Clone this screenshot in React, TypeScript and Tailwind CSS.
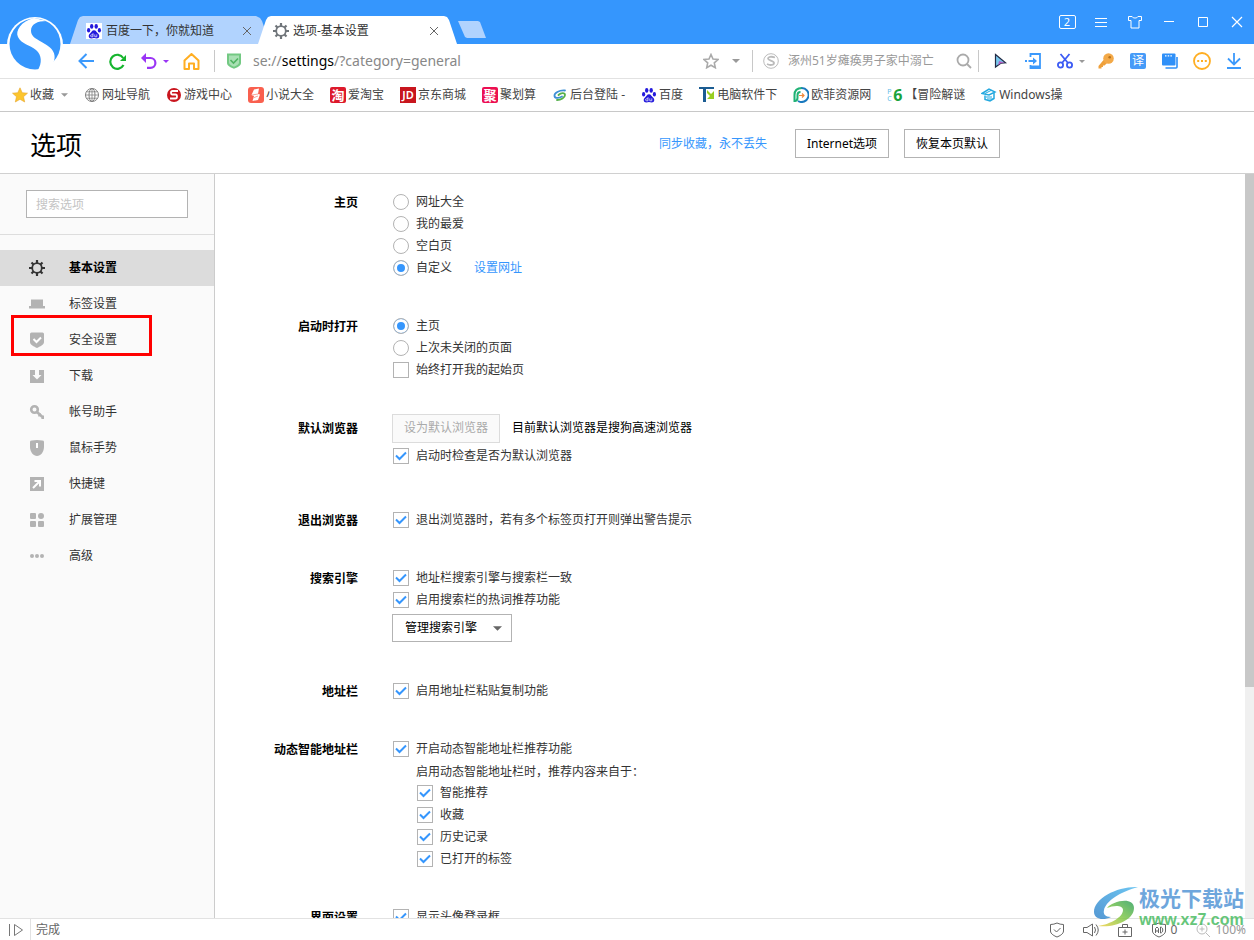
import type { ReactNode } from "react";

function Paw() {
    return (
        <svg viewBox="0 0 16 16" className="size-4 shrink-0">
            <g fill="#2319dc">
                <ellipse cx="5.700" cy="3.400" rx="1.700" ry="2.400" />
                <ellipse cx="10.200" cy="3.400" rx="1.700" ry="2.400" />
                <ellipse cx="2.600" cy="7.200" rx="1.600" ry="2.200" />
                <ellipse cx="13.400" cy="7.200" rx="1.600" ry="2.200" />
                <path d="M8 7.200c-2 0-2.600 2-4 3.200-2.200 1.900-1.400 5 1.200 5 1.100 0 1.800-.3 2.800-.3s1.700.3 2.800.3c2.600 0 3.400-3.100 1.200-5C10.600 9.200 10 7.200 8 7.200z" />
            </g>
            <path d="M7 10.200v3.600H5.600a1 1 0 0 1 0-2H7M8.800 11.400v2.400h2v-2.400" fill="none" stroke="#fff" strokeWidth=".7" />
        </svg>
    );
}

function Gear({ className, width }: { className: string; width: number }) {
    return (
        <svg viewBox="0 0 16 16" className={className} fill="none" stroke="currentColor" strokeWidth={width}>
            <circle cx="8" cy="8" r="4.800" />
            <path d="M8 0v3M8 13v3M0 8h3M13 8h3M2.500 2.500l2 2M11.500 11.500l2 2M13.500 2.500l-2 2M4.500 11.500l-2 2" strokeWidth="2.200" />
        </svg>
    );
}

function Caret({ className }: { className: string }) {
    return (
        <svg viewBox="0 0 8 4" className={className} fill="currentColor">
            <path d="M0 0h8L4 4z" />
        </svg>
    );
}

function CloseIcon() {
    return (
        <svg viewBox="0 0 12 12" className="size-3" fill="none" stroke="#666">
            <path d="M2 2l8 8M10 2l-8 8" />
        </svg>
    );
}

function Logo() {
    return (
        <svg viewBox="0 0 56 56" className="absolute top-[17px] left-[7px] size-14">
            <circle cx="28" cy="28" r="28" fill="#fff" />
            <circle cx="28" cy="27" r="25.500" fill="#3596fd" />
            <path
                d="M27 1C14 4 8 14 11 20c3 7 12 8 18 13 6 5 6 13 2 20h11c9-11 7-20-4-26-8-5-14-7-14-13C24 7 30 4 40 4z"
                fill="#fff"
            />
            <path d="M42 52c7-4 12-13 12-24 3 15-4 26-14 28z" fill="#fff" />
        </svg>
    );
}

function TitleBar() {
    return (
        <div className="flex h-11 shrink-0 items-end bg-[#3596fd] pl-[70px]">
            <div className="flex h-7 w-[200px] items-center bg-[#b1d3fe] pt-0.5 pl-4 [clip-path:polygon(0_100%,8px_4px,10px_1px,13px_0,calc(100%_-_14px)_0,calc(100%_-_10px)_2px,calc(100%_-_8px)_5px,100%_100%)]">
                <span className="bg-white"><Paw /></span>
                <span className="ml-1 flex-1">百度一下，你就知道</span>
                <button aria-label="关闭标签" className="mr-[17px]"><CloseIcon /></button>
            </div>
            <div className="-ml-3 flex h-7 w-[199px] items-center bg-white pt-0.5 pl-[15px] [clip-path:polygon(0_100%,8px_4px,10px_1px,13px_0,calc(100%_-_13px)_0,calc(100%_-_10px)_1px,calc(100%_-_8px)_4px,100%_100%)]">
                <Gear className="size-4 text-[#70757a]" width={1.8} />
                <span className="ml-1 flex-1">选项-基本设置</span>
                <button aria-label="关闭标签" className="mr-[17px]"><CloseIcon /></button>
            </div>
            <button
                aria-label="新建标签"
                className="mb-1.5 ml-px h-[17px] w-7 bg-[#b1d3fe] [clip-path:polygon(0_0,20px_0,22px_1px,100%_100%,9px_100%,7px_16px)]"
            />
            <div className="ml-auto flex h-11 items-center text-white">
                <button className="flex w-[34px] justify-center">
                    <span className="h-[14px] w-[17px] rounded-xs border border-white text-[11px] leading-3">2</span>
                </button>
                <button aria-label="菜单" className="flex w-[34px] justify-center">
                    <svg viewBox="0 0 16 16" className="size-4" stroke="currentColor">
                        <path d="M2 4.500h12M2 8.500h12M2 12.500h12" />
                    </svg>
                </button>
                <button aria-label="皮肤" className="flex w-[34px] justify-center">
                    <svg viewBox="0 0 16 16" className="size-4" fill="none" stroke="currentColor">
                        <path d="M1.500 2.500h3.500c1 2 5 2 6 0h3.500v4h-2.500v7.500h-8v-7.500h-2.500z" />
                    </svg>
                </button>
                <button aria-label="最小化" className="flex w-[34px] justify-center">
                    <svg viewBox="0 0 16 16" className="size-4" stroke="currentColor"><path d="M3 7.500h10" /></svg>
                </button>
                <button aria-label="最大化" className="flex w-[34px] justify-center">
                    <svg viewBox="0 0 16 16" className="size-4" fill="none" stroke="currentColor">
                        <path d="M3.500 3.500h9v9h-9z" />
                    </svg>
                </button>
                <button aria-label="关闭" className="flex w-[34px] justify-center">
                    <svg viewBox="0 0 16 16" className="size-4" stroke="currentColor" strokeWidth="1.200">
                        <path d="M3 3l10 10M13 3l-10 10" />
                    </svg>
                </button>
            </div>
        </div>
    );
}

function Toolbar() {
    return (
        <div className="flex h-[35px] shrink-0 items-center border-b border-[#e2e2e2] pl-[78px]">
            <button aria-label="后退">
                <svg viewBox="0 0 16 16" className="size-4" fill="none" stroke="#3b99fc" strokeWidth="2">
                    <path d="M16 8H1.500M8.500 1L1.500 8l7 7" />
                </svg>
            </button>
            <button aria-label="刷新" className="ml-[15px]">
                <svg viewBox="0 0 17 17" className="size-[17px]">
                    <path d="M14.200 5A7 7 0 1 0 14.500 12" fill="none" stroke="#16b52e" strokeWidth="2.200" />
                    <path d="M17 2v6h-6z" fill="#16b52e" />
                </svg>
            </button>
            <button aria-label="撤销" className="ml-[15px] flex items-center gap-1.5 text-[#9a35f5]">
                <svg viewBox="0 0 16 16" className="size-4">
                    <path d="M0 5l5-5v10z" fill="currentColor" />
                    <path d="M4 5h5.500a4.800 4.800 0 0 1 0 9.800H6" fill="none" stroke="currentColor" strokeWidth="2.200" />
                </svg>
                <Caret className="h-[3px] w-1.5" />
            </button>
            <button aria-label="主页" className="ml-3.5">
                <svg viewBox="0 0 17 17" className="size-[17px]" fill="none" stroke="#ffae22" strokeWidth="2" strokeLinejoin="round">
                    <path d="M1.500 7.500l7-6.500 7 6.500V16h-4.500v-5.500h-5V16h-4.500z" />
                </svg>
            </button>
            <div className="ml-3.5 h-[22px] w-px bg-[#c8c8c8]" />
            <svg viewBox="0 0 16 16" className="ml-[11px] size-4">
                <path d="M1 .5h14v9.500c0 3-4 4.500-7 5.800C5 14.500 1 13 1 10z" fill="#73c983" />
                <path d="M3 2.500h10v7c0 2-3 3.200-5 4.200-2-1-5-2.200-5-4.200z" fill="#a9e0b4" />
                <path d="M4.500 7l3 3 4.500-4.500" fill="none" stroke="#4fb362" strokeWidth="1.600" />
            </svg>
            <div className="ml-[11px] flex-1 truncate text-sm text-[#888]">
                se://<span className="text-black">settings</span>/?category=general
            </div>
            <button aria-label="收藏此页" className="mr-[13px]">
                <svg viewBox="0 0 16 16" className="size-4" fill="none" stroke="#aaa" strokeWidth="1.600">
                    <path d="M8 1.500l2 4.500 5 .5-3.700 3.300 1 4.900L8 12.200l-4.300 2.500 1-4.900L1 6.500 6 6z" />
                </svg>
            </button>
            <button aria-label="更多" className="mr-3 text-[#999]"><Caret className="h-1 w-2" /></button>
            <div className="flex w-[226px] items-center">
                <div className="h-[22px] w-px bg-[#c8c8c8]" />
                <svg viewBox="0 0 16 16" className="ml-2.5 size-4" fill="none" stroke="#bbb">
                    <circle cx="8" cy="8" r="7.300" />
                    <path d="M12 4.500C8 3 5 4 5 5.600c0 2 6 2 6 4.400 0 2.200-4 2.600-7 1" strokeWidth="1.800" />
                </svg>
                <input
                    aria-label="搜索"
                    placeholder="涿州51岁瘫痪男子家中溺亡"
                    className="ml-[9px] min-w-0 flex-1 outline-none placeholder:text-[#999]"
                />
                <button aria-label="搜索" className="mr-1.5">
                    <svg viewBox="0 0 16 16" className="size-4" fill="none" stroke="#aaa" strokeWidth="1.800">
                        <circle cx="7" cy="7" r="5.500" />
                        <path d="M11 11l4 4" />
                    </svg>
                </button>
            </div>
            <div className="h-[22px] w-px bg-[#c8c8c8]" />
            <div className="flex items-center gap-4 pr-3 pl-[14px]">
                <button aria-label="选择">
                    <svg viewBox="0 0 16 16" className="size-4">
                        <path d="M2.500 1.500l10 8.300-4.300.3-5.700 4z" fill="#79c8ee" stroke="#222b45" strokeWidth="1.200" />
                        <path d="M6 8l6 1.800-3.800.3-3 2z" fill="#b35fc4" />
                    </svg>
                </button>
                <button aria-label="发送到手机">
                    <svg viewBox="0 0 16 16" className="size-4" fill="none" stroke="#3b99fc" strokeWidth="1.800">
                        <path d="M5.500 4V1h9.500v14H5.500v-3M0 8h2M3.500 8H10" />
                        <path d="M8 4.500l4 3.500-4 3.500z" fill="#3b99fc" stroke="none" />
                        <path d="M5 13.500h10" strokeWidth="2" />
                    </svg>
                </button>
                <button aria-label="截图" className="flex w-[25px] items-center gap-1.5 text-[#999]">
                    <svg viewBox="0 0 16 16" className="size-4 shrink-0" fill="none" stroke="#3c5bf4" strokeWidth="1.800">
                        <circle cx="3.500" cy="12" r="2.600" />
                        <circle cx="12.500" cy="12" r="2.600" />
                        <path d="M3.500 1l7.500 9M12.500 1L5 10" />
                    </svg>
                    <Caret className="h-[3px] w-1.5 shrink-0" />
                </button>
                <button aria-label="密码">
                    <svg viewBox="0 0 16 16" className="size-4">
                        <path d="M5.500 7L.5 13v2.500h3V14H5v-1.500h1.500L9 10z" fill="#efa03a" />
                        <circle cx="10.500" cy="5.500" r="5.300" fill="#f3a948" />
                        <circle cx="11.700" cy="4.300" r="1.300" fill="#b8721b" />
                    </svg>
                </button>
                <button aria-label="翻译" className="size-4 rounded-xs bg-[#469bf8] text-center leading-4 text-white">译</button>
                <button aria-label="窗口">
                    <svg viewBox="0 0 16 16" className="size-4">
                        <path d="M0 1.500Q0 .5 1 .5h11.500q1 0 1 1v10q0 1-1 1H1q-1 0-1-1z" fill="#2f90f8" />
                        <path d="M15 4v10q0 1-1 1H3.500" fill="none" stroke="#2f90f8" strokeWidth="1.600" />
                        <path d="M3 2.800h8" stroke="#fff" strokeWidth="1.300" strokeDasharray="1.500 1.200" />
                    </svg>
                </button>
                <button aria-label="更多工具" className="-mx-px">
                    <svg viewBox="0 0 18 18" className="size-[18px]">
                        <circle cx="9" cy="9" r="8" fill="none" stroke="#ffae22" strokeWidth="1.800" />
                        <path d="M4.200 9h10" stroke="#ffae22" strokeWidth="2" strokeDasharray="2 1.800" />
                    </svg>
                </button>
                <button aria-label="下载">
                    <svg viewBox="0 0 16 16" className="size-4" fill="none" stroke="#3b99fc" strokeWidth="1.800">
                        <path d="M8 0v11M2 5.500l6 6 6-6M1 15h14" />
                    </svg>
                </button>
            </div>
        </div>
    );
}

const bookmarks: { name: string; icon: ReactNode }[] = [
    {
        name: "网址导航",
        icon: (
            <svg viewBox="0 0 16 16" className="size-4" fill="none" stroke="#808080">
                <circle cx="8" cy="8" r="6.500" />
                <ellipse cx="8" cy="8" rx="3" ry="6.500" />
                <path d="M8 1.500v13M1.500 8h13M2.500 4.800h11M2.500 11.200h11" strokeWidth=".8" />
            </svg>
        ),
    },
    {
        name: "游戏中心",
        icon: (
            <svg viewBox="0 0 16 16" className="size-4">
                <circle cx="8" cy="8" r="7" fill="#c9151e" />
                <path d="M12 4H6.500Q5 4 5 5.800T6.500 7.500h3q1.500 0 1.500 2T9.500 11.500H4" fill="none" stroke="#fff" strokeWidth="1.800" />
            </svg>
        ),
    },
    {
        name: "小说大全",
        icon: (
            <svg viewBox="0 0 16 16" className="size-4">
                <rect width="16" height="16" rx="3" fill="#f9604f" />
                <path d="M6 2.500l5-1-1 5.500 2 .5-2 5.500-5.500 1L6 9 3.500 8z" fill="#fff" />
                <path d="M4 8l6-1M5 11l5-2" stroke="#f9a49a" />
            </svg>
        ),
    },
    {
        name: "爱淘宝",
        icon: <span className="block size-4 rounded-xs bg-[#dd1a2c] text-center text-[13px] leading-4 font-bold text-white">淘</span>,
    },
    {
        name: "京东商城",
        icon: <span className="block size-4 bg-[#c8161e] text-center text-[11px] leading-4 font-semibold text-white">JD</span>,
    },
    {
        name: "聚划算",
        icon: <span className="block size-4 rounded-xs bg-[#ec0f51] text-center text-[13px] leading-4 font-bold text-white">聚</span>,
    },
    {
        name: "后台登陆 -",
        icon: (
            <svg viewBox="0 0 16 16" className="size-4" fill="none" strokeLinecap="round">
                <path d="M13 3.500C7 3 2 6 2.500 9s5 2 7.500.5" stroke="#3d8fd6" strokeWidth="1.800" />
                <path d="M6.500 8C9 5.500 13 5.500 13 8s-4 5-8 5" stroke="#55b04b" strokeWidth="1.800" />
            </svg>
        ),
    },
    { name: "百度", icon: <Paw /> },
    {
        name: "电脑软件下",
        icon: (
            <svg viewBox="0 0 16 16" className="size-4">
                <path d="M0 0h15v2H7v13H4V2H0z" fill="#1b5c92" />
                <path d="M8 3l4 4 3-3v8H8l3-3-3-3z" fill="#98ce21" />
            </svg>
        ),
    },
    {
        name: "欧菲资源网",
        icon: (
            <svg viewBox="0 0 16 16" className="size-4" fill="none" strokeWidth="2">
                <path d="M9 1C4 1 1.500 4 1.500 8v7" stroke="#20b275" />
                <path d="M8.500 1A7 7 0 1 1 5 14" stroke="#1878be" />
                <path d="M1.500 14c2 0 3-1 3-3V8c0-2 1-3 3-3" stroke="#20b275" />
                <path d="M6 8.500h5M9 6.500l2 2-2 2" stroke="#f08a3c" strokeWidth="1.200" />
            </svg>
        ),
    },
    {
        name: "【冒险解谜",
        icon: (
            <span className="flex size-4 items-center">
                <span className="w-1.5 text-[7px] leading-[7px] text-[#62bde8]">P<br />C</span>
                <span className="text-base leading-4 font-bold text-[#19a33b]">6</span>
            </span>
        ),
    },
    {
        name: "Windows操",
        icon: (
            <svg viewBox="0 0 16 16" className="size-4" fill="none" stroke="#25a9df" strokeWidth="1.500">
                <path d="M1 6.500L8 2l6 3-6 3zM4 8.500v4l5 1.500 4-2.500V6" />
                <path d="M5 10h6M6 12h6M4 6.500l6-3" strokeWidth="1" />
            </svg>
        ),
    },
];

function BookmarkBar() {
    return (
        <div className="flex h-[33px] shrink-0 items-center gap-4 overflow-hidden border-b border-[#c8c8c8] pl-3 whitespace-nowrap text-[#444]">
            <button className="flex items-center gap-0.5">
                <svg viewBox="0 0 16 16" className="size-4">
                    <path d="M8 .8l2.200 4.900 5.300.5-4 3.500 1.200 5.300L8 12.300 3.300 15l1.200-5.300-4-3.500 5.300-.5z" fill="#fcc52d" stroke="#e5a52b" strokeWidth=".6" />
                </svg>
                收藏
                <Caret className="ml-[5px] h-1 w-[7px] text-[#999]" />
            </button>
            {bookmarks.map((b) => (
                <a key={b.name} href="#" className="flex items-center gap-0.5">
                    {b.icon}
                    {b.name}
                </a>
            ))}
        </div>
    );
}

const navItems: { name: string; icon: ReactNode }[] = [
    { name: "基本设置", icon: <Gear className="size-4 text-[#333]" width={1.8} /> },
    { name: "标签设置", icon: <path d="M2 3.500h12V10h2v2.500H0V10h2z" /> },
    {
        name: "安全设置",
        icon: (
            <>
                <path d="M1 2Q1 .5 2.500 .5h11Q15 .5 15 2v8c0 3-4 4.500-7 6-3-1.500-7-3-7-6z" />
                <path d="M4.500 7l3 3L12 5.500" fill="none" stroke="#fff" strokeWidth="2" />
            </>
        ),
    },
    { name: "下载", icon: <path d="M1 2h5v5H3.500L8 11.500 12.500 7H10V2h5v13H1z" /> },
    {
        name: "帐号助手",
        icon: (
            <g fill="none" stroke="#b3b3b3" strokeWidth="2.600">
                <circle cx="5.500" cy="5.500" r="3.300" />
                <path d="M8 8l6 5.500M10.500 9v3.500M13.700 11.500v3.500" />
            </g>
        ),
    },
    {
        name: "鼠标手势",
        icon: (
            <>
                <path d="M1 1.500Q1 0 8 0t7 1.500V7c0 5-3.500 9-7 9S1 12 1 7z" />
                <path d="M8 3v5" stroke="#fff" strokeWidth="2" />
            </>
        ),
    },
    {
        name: "快捷键",
        icon: (
            <>
                <path d="M1 1h14v14H1z" />
                <path d="M4 12l6-6M5.500 5H11v5.500" fill="none" stroke="#fff" strokeWidth="2" />
            </>
        ),
    },
    {
        name: "扩展管理",
        icon: (
            <>
                <rect x="1" y="1" width="6" height="6" rx="1" />
                <circle cx="12" cy="4" r="3" />
                <rect x="1" y="9" width="6" height="6" rx="1" />
                <rect x="9" y="9" width="6" height="6" rx="1" />
            </>
        ),
    },
    {
        name: "高级",
        icon: (
            <>
                <circle cx="3" cy="8" r="2" />
                <circle cx="8" cy="8" r="2" />
                <circle cx="13" cy="8" r="2" />
            </>
        ),
    },
];

function Sidebar() {
    return (
        <aside className="w-[215px] shrink-0 border-r border-[#ccc] bg-[#fafafa]">
            <div className="border-b border-[#ddd] px-[26px] py-4">
                <input
                    aria-label="搜索选项"
                    placeholder="搜索选项"
                    className="h-7 w-full border border-[#b3b3b3] bg-white px-[9px] outline-none placeholder:text-[#c4c4c4]"
                />
            </div>
            <nav className="pt-[15px]">
                {navItems.map((item, i) => (
                    <a
                        key={item.name}
                        href="#"
                        className={
                            i === 0
                                ? "flex h-9 items-center gap-6 bg-[#dcdcdc] pl-[29px] font-bold text-black"
                                : "relative flex h-9 items-center gap-6 pl-[29px]"
                        }
                    >
                        {i === 0 ? item.icon : <svg viewBox="0 0 16 16" className="size-4" fill="#b3b3b3">{item.icon}</svg>}
                        {item.name}
                        {item.name === "安全设置" && (
                            <span className="absolute -top-[7px] left-[11px] h-[41px] w-[141px] border-3 border-[#f00]" />
                        )}
                    </a>
                ))}
            </nav>
        </aside>
    );
}

function Section({ title, className, children }: { title: string; className?: string; children: ReactNode }) {
    return (
        <section className={className ?? "mb-9 flex"}>
            <h2 className="w-[143px] text-right leading-6 font-bold text-black">{title}</h2>
            <div className="ml-[34px]">{children}</div>
        </section>
    );
}

function Check({ label, checked = true }: { label: string; checked?: boolean }) {
    return (
        <label className="ml-px flex h-[22px] items-center gap-[7px]">
            <span className="grid size-4 place-items-center">
                <input
                    type="checkbox"
                    defaultChecked={checked}
                    className="peer col-start-1 row-start-1 size-4 appearance-none border border-[#b3b3b3] bg-white"
                />
                <svg
                    viewBox="0 0 16 16"
                    className="pointer-events-none invisible col-start-1 row-start-1 size-4 peer-checked:visible"
                    fill="none"
                    stroke="#3596fd"
                    strokeWidth="2"
                >
                    <path d="M3 7.500l3.500 3.500L13 4.500" />
                </svg>
            </span>
            <span className="leading-6">{label}</span>
        </label>
    );
}

function Radio({ name, label, checked }: { name: string; label: string; checked?: boolean }) {
    return (
        <label className="ml-px flex h-[22px] items-center gap-[7px]">
            <input
                type="radio"
                name={name}
                defaultChecked={checked}
                className="size-4 appearance-none rounded-full border border-[#b3b3b3] bg-white checked:bg-[#3596fd] checked:shadow-[inset_0_0_0_3px_white]"
            />
            <span className="leading-6">{label}</span>
        </label>
    );
}

function Settings() {
    return (
        <main className="min-w-0 flex-1 overflow-hidden bg-white pt-[17px]">
            <Section title="主页">
                <Radio name="home" label="网址大全" />
                <Radio name="home" label="我的最爱" />
                <Radio name="home" label="空白页" />
                <div className="flex h-[22px] items-center gap-[22px]">
                    <Radio name="home" label="自定义" checked />
                    <a href="#" className="leading-6 text-[#3596fd]">设置网址</a>
                </div>
            </Section>
            <Section title="启动时打开">
                <Radio name="startup" label="主页" checked />
                <Radio name="startup" label="上次未关闭的页面" />
                <Check label="始终打开我的起始页" checked={false} />
            </Section>
            <Section title="默认浏览器" className="mb-[42px] flex">
                <div className="mb-1.5 flex h-[22px] items-center gap-3 leading-6 text-black">
                    <button disabled className="h-[29px] w-[108px] border border-[#dcdcdc] bg-[#fafafa] text-[#aaa]">
                        设为默认浏览器
                    </button>
                    目前默认浏览器是搜狗高速浏览器
                </div>
                <Check label="启动时检查是否为默认浏览器" />
            </Section>
            <section className="mb-9 flex h-[22px]">
                <h2 className="w-[143px] text-right leading-6 font-bold text-black">退出浏览器</h2>
                <div className="ml-[34px]">
                    <Check label="退出浏览器时，若有多个标签页打开则弹出警告提示" />
                </div>
            </section>
            <Section title="搜索引擎" className="mb-[38px] flex">
                <Check label="地址栏搜索引擎与搜索栏一致" />
                <Check label="启用搜索栏的热词推荐功能" />
                <div className="mt-[3px] grid w-[120px] items-center">
                    <select
                        aria-label="管理搜索引擎"
                        className="col-start-1 row-start-1 h-7 appearance-none border border-[#b3b3b3] bg-white pl-3 text-black"
                    >
                        <option>管理搜索引擎</option>
                    </select>
                    <Caret className="pointer-events-none col-start-1 row-start-1 mr-2.5 h-[5px] w-[9px] justify-self-end text-[#666]" />
                </div>
            </Section>
            <Section title="地址栏" className="mb-9 flex h-[22px]">
                <Check label="启用地址栏粘贴复制功能" />
            </Section>
            <Section title="动态智能地址栏">
                <Check label="开启动态智能地址栏推荐功能" />
                <div className="pl-6">
                    <p className="h-[22px] leading-6">启用动态智能地址栏时，推荐内容来自于：</p>
                    <Check label="智能推荐" />
                    <Check label="收藏" />
                    <Check label="历史记录" />
                    <Check label="已打开的标签" />
                </div>
            </Section>
            <Section title="界面设置">
                <Check label="显示头像登录框" />
            </Section>
        </main>
    );
}

function StatusBar() {
    return (
        <footer className="flex h-[22px] shrink-0 items-center border-t border-[#e2e2e2] bg-white pr-2 text-[#666]">
            <button aria-label="侧边栏" className="ml-2">
                <svg viewBox="0 0 16 16" className="size-4" fill="none" stroke="#777">
                    <path d="M1.500 2v12M6.500 2.500l8 5.500-8 5.500z" />
                </svg>
            </button>
            <div className="ml-1.5 h-full w-px bg-[#e2e2e2]" />
            <span className="ml-[5px]">完成</span>
            <div className="ml-auto flex items-center gap-[18px]">
                <svg viewBox="0 0 16 16" className="size-4" fill="none" stroke="#666">
                    <path d="M1.500 2.500Q5 2.500 8 1q3 1.500 6.500 1.500V9c0 3-4 5-6.500 6-2.500-1-6.500-3-6.500-6zM5 7.500l2.500 2.500 4-4" />
                </svg>
                <svg viewBox="0 0 16 16" className="size-4" fill="none" stroke="#666">
                    <path d="M.5 5.500h3.500L9.500 2v12L4 10.500H.5zM11.500 5q2 3 0 6M13 2.500q4.500 5.500 0 11" />
                </svg>
                <svg viewBox="0 0 16 16" className="size-4" fill="none" stroke="#666">
                    <path d="M1.500 5.500h13v9h-13zM5.500 5.500v-3h5v3M8 7.500v5M5.500 10h5" />
                </svg>
                <span className="flex items-center gap-1">
                    <svg viewBox="0 0 16 16" className="size-4" fill="none" stroke="#666">
                        <path d="M1.500 2.500Q5 2.500 8 1q3 1.500 6.500 1.500V9c0 3-4 5-6.500 6-2.500-1-6.500-3-6.500-6z" />
                        <path d="M4.500 11V6.500L6 5l1.500 1.500V11M4.500 9h3M9.500 5v6c3 0 3-6 0-6z" />
                    </svg>
                    0
                </span>
                <span className="flex items-center gap-1 text-[#999]">
                    <svg viewBox="0 0 16 16" className="size-4" fill="none" stroke="#bbb">
                        <circle cx="7" cy="7" r="5" />
                        <path d="M11 11l4 4M4.500 7h5M7 4.500v5" />
                    </svg>
                    100%
                </span>
            </div>
        </footer>
    );
}

function Watermark() {
    return (
        <div className="pointer-events-none absolute right-2.5 bottom-2 flex items-center opacity-80">
            <svg viewBox="0 0 46 42" className="h-[42px] w-[46px]">
                <defs>
                    <linearGradient id="swooshBlue" x1="0" y1="1" x2="1" y2="0">
                        <stop offset="0" stopColor="#2b7fc9" />
                        <stop offset="1" stopColor="#49b8ef" />
                    </linearGradient>
                    <linearGradient id="swooshGreen" x1="0" y1="1" x2="1" y2="0">
                        <stop offset="0" stopColor="#f3cf3c" />
                        <stop offset=".5" stopColor="#7cc63f" />
                        <stop offset="1" stopColor="#249b55" />
                    </linearGradient>
                </defs>
                <path d="M45 1C25 0 1 12 1 26c0 7 9 9 17 5-6 0-8-3-7-7C13 15 27 6 45 1z" fill="url(#swooshBlue)" />
                <path d="M14 22c5-7 27-12 27 0 0 11-17 20-36 18 13-2 25-9 25-16 0-5-9-5-16-2z" fill="url(#swooshGreen)" />
            </svg>
            <div className="pt-1.5 text-center leading-5 font-bold">
                <div className="text-[21px] text-[#4a90d4]">极光下载站</div>
                <div className="font-['Liberation_Sans',sans-serif] text-base text-[#41b95a]">www.xz7.com</div>
            </div>
        </div>
    );
}

export default function App() {
    return (
        <div className="relative flex h-screen flex-col overflow-hidden bg-white font-['Noto_Sans','Noto_Sans_CJK_SC',sans-serif] text-xs text-[#333]">
            <TitleBar />
            <Toolbar />
            <BookmarkBar />
            <header className="h-[62px] shrink-0 border-b border-[#d0d0d0]">
                <div className="flex h-full max-w-[1000px] items-center pt-0.5 pl-[30px]">
                    <h1 className="flex-1 pt-1 text-[26px] text-black">选项</h1>
                    <a href="#" className="text-[#3596fd]">同步收藏，永不丢失</a>
                    <button className="ml-7 h-[29px] border border-[#b3b3b3] px-[11px] text-black">Internet选项</button>
                    <button className="ml-[15px] h-[29px] border border-[#b3b3b3] px-[11px] text-black">恢复本页默认</button>
                </div>
            </header>
            <div className="flex min-h-0 flex-1">
                <Sidebar />
                <Settings />
                <div className="w-[9px] shrink-0 bg-[#f0f0f0]">
                    <div className="h-[69%] bg-[#c8c8c8]" />
                </div>
            </div>
            <StatusBar />
            <Logo />
            <Watermark />
        </div>
    );
}
